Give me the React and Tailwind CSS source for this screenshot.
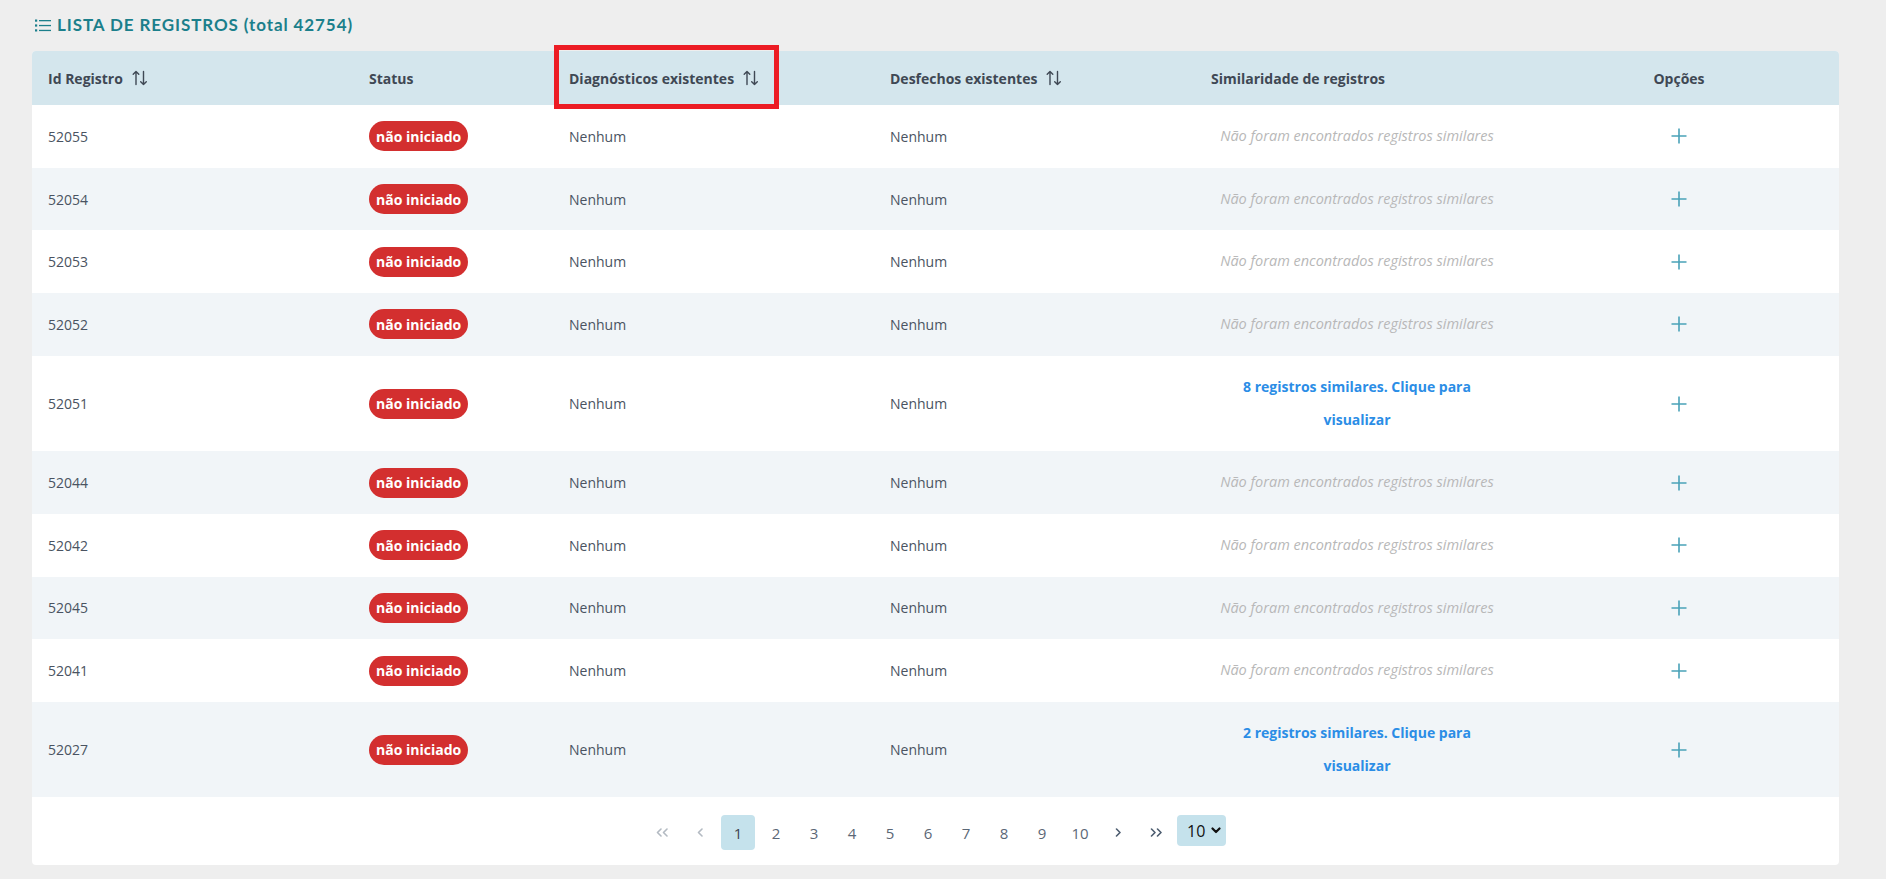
import React from "react";

const rows = [
  { id: "52055" },
  { id: "52054" },
  { id: "52053" },
  { id: "52052" },
  { id: "52051", sim: 8 },
  { id: "52044" },
  { id: "52042" },
  { id: "52045" },
  { id: "52041" },
  { id: "52027", sim: 2 },
];

const GRID = "grid grid-cols-[321px_200px_321px_321px_324px_320px] items-center";

function SortIcon() {
  return (
    <svg width="16" height="16" viewBox="0 0 16 16" fill="none" stroke="#3f4854" strokeWidth="1.4" strokeLinecap="round" strokeLinejoin="round" className="ml-[9px] shrink-0">
      <path d="M4 14.5V1.5M1.2 4.3L4 1.5l2.8 2.8" />
      <path d="M11.5 1.5v13M8.7 11.7l2.8 2.8 2.8-2.8" />
    </svg>
  );
}

function PlusIcon() {
  return (
    <svg width="16" height="16" viewBox="0 0 16 16" fill="none" stroke="#4aa2b8" strokeWidth="1.6">
      <path d="M8 0.5v15M0.5 8h15" />
    </svg>
  );
}

function ListIcon() {
  return (
    <svg width="16" height="13" viewBox="0 0 16 13" fill="#1b7f8b">
      <rect x="0" y="0.5" width="2.2" height="2.2" />
      <rect x="0" y="5.4" width="2.2" height="2.2" />
      <rect x="0" y="10.3" width="2.2" height="2.2" />
      <rect x="4" y="1" width="12" height="1.3" />
      <rect x="4" y="5.9" width="12" height="1.3" />
      <rect x="4" y="10.8" width="12" height="1.3" />
    </svg>
  );
}

function Chev({ dir = "left", double = false, color }) {
  const single = dir === "left" ? "M5 1L1.5 4.5L5 8" : "M1.5 1L5 4.5L1.5 8";
  const second = dir === "left" ? "M11 1L7.5 4.5L11 8" : "M7.5 1L11 4.5L7.5 8";
  return (
    <svg width={double ? 13 : 7} height="9" viewBox={double ? "0 0 13 9" : "0 0 7 9"} fill="none" stroke={color} strokeWidth="1.6" strokeLinecap="round" strokeLinejoin="round">
      <path d={single} />
      {double && <path d={second} />}
    </svg>
  );
}

export default function App() {
  const font = { fontFamily: '"Open Sans", "Noto Sans", sans-serif' };
  return (
    <div className="min-h-[879px] w-full bg-[#eeeeee] pl-[32px] pr-[47px] pt-[13px] pb-[16px]" style={font}>
      <div className="flex items-center h-[24px] mb-[14px] text-[#1b7f8b]">
        <span className="mr-[6px] ml-[3px] flex items-center"><ListIcon /></span>
        <h1 className="text-[17px] font-bold tracking-[0.9px] leading-[24px]" style={{ fontFamily: 'Lato, "Open Sans", sans-serif' }}>
          LISTA DE REGISTROS (total 42754)
        </h1>
      </div>

      <div className="bg-white rounded-[4px] overflow-visible">
        {/* header */}
        <div className={`${GRID} h-[54px] bg-[#d4e6ed] rounded-t-[4px] text-[14px] font-bold text-[#3f4854]`}>
          <div className="px-4 flex items-center">Id Registro<SortIcon /></div>
          <div className="px-4">Status</div>
          <div className="px-4 flex items-center relative self-stretch">
            Diagnósticos existentes<SortIcon />
            <div className="absolute left-[1px] top-[-6px] w-[225px] h-[64px] border-[5px] border-[#ec1c24] pointer-events-none" />
          </div>
          <div className="px-4 flex items-center">Desfechos existentes<SortIcon /></div>
          <div className="px-4">Similaridade de registros</div>
          <div className="px-4 text-center">Opções</div>
        </div>

        {/* rows */}
        {rows.map((r, i) => (
          <div key={r.id} className={`${GRID} text-[14px] text-[#4a5361] ${i % 2 === 1 ? "bg-[#f1f5f8]" : "bg-white"}`}>
            <div className="px-4">{r.id}</div>
            <div className="px-4">
              <span className="inline-flex items-center h-[30px] px-[7px] rounded-full bg-[#d32f2f] text-white font-bold text-[14px]">
                não iniciado
              </span>
            </div>
            <div className="px-4">Nenhum</div>
            <div className="px-4">Nenhum</div>
            <div className="px-4 py-[15px] text-center leading-[32.7px]">
              {r.sim ? (
                <span className="text-[#2b8de6] font-bold text-[14px]">
                  {r.sim} registros similares. Clique para<br />visualizar
                </span>
              ) : (
                <span className="italic text-[#b8b8b8] text-[14.5px]">Não foram encontrados registros similares</span>
              )}
            </div>
            <div className="px-4 flex justify-center"><PlusIcon /></div>
          </div>
        ))}

        {/* pagination */}
        <div className="flex justify-center items-start gap-[4px] pt-[18px] pb-[15px] text-[15px] text-[#5b6776]">
          <div className="w-[34px] h-[35px] flex items-center justify-center"><Chev dir="left" double color="#b3bac2" /></div>
          <div className="w-[34px] h-[35px] flex items-center justify-center"><Chev dir="left" color="#b3bac2" /></div>
          {["1", "2", "3", "4", "5", "6", "7", "8", "9", "10"].map((n) => (
            <div
              key={n}
              className={`w-[34px] h-[35px] flex items-center justify-center rounded-[4px] ${n === "1" ? "bg-[#c5e2ec] text-[#3d4450]" : ""}`}
            >
              {n}
            </div>
          ))}
          <div className="w-[34px] h-[35px] flex items-center justify-center"><Chev dir="right" color="#4d5d70" /></div>
          <div className="w-[34px] h-[35px] flex items-center justify-center"><Chev dir="right" double color="#4d5d70" /></div>
          <div className="w-[49px] h-[31px] rounded-[4px] bg-[#c5e2ec] flex items-center pl-[10px] text-[16px] text-[#111]">
            10
            <svg width="10" height="7" viewBox="0 0 10 7" fill="none" stroke="#111" strokeWidth="2.2" strokeLinecap="round" strokeLinejoin="round" className="ml-[6px]">
              <path d="M1.5 1.5L5 5l3.5-3.5" />
            </svg>
          </div>
        </div>
      </div>
    </div>
  );
}
